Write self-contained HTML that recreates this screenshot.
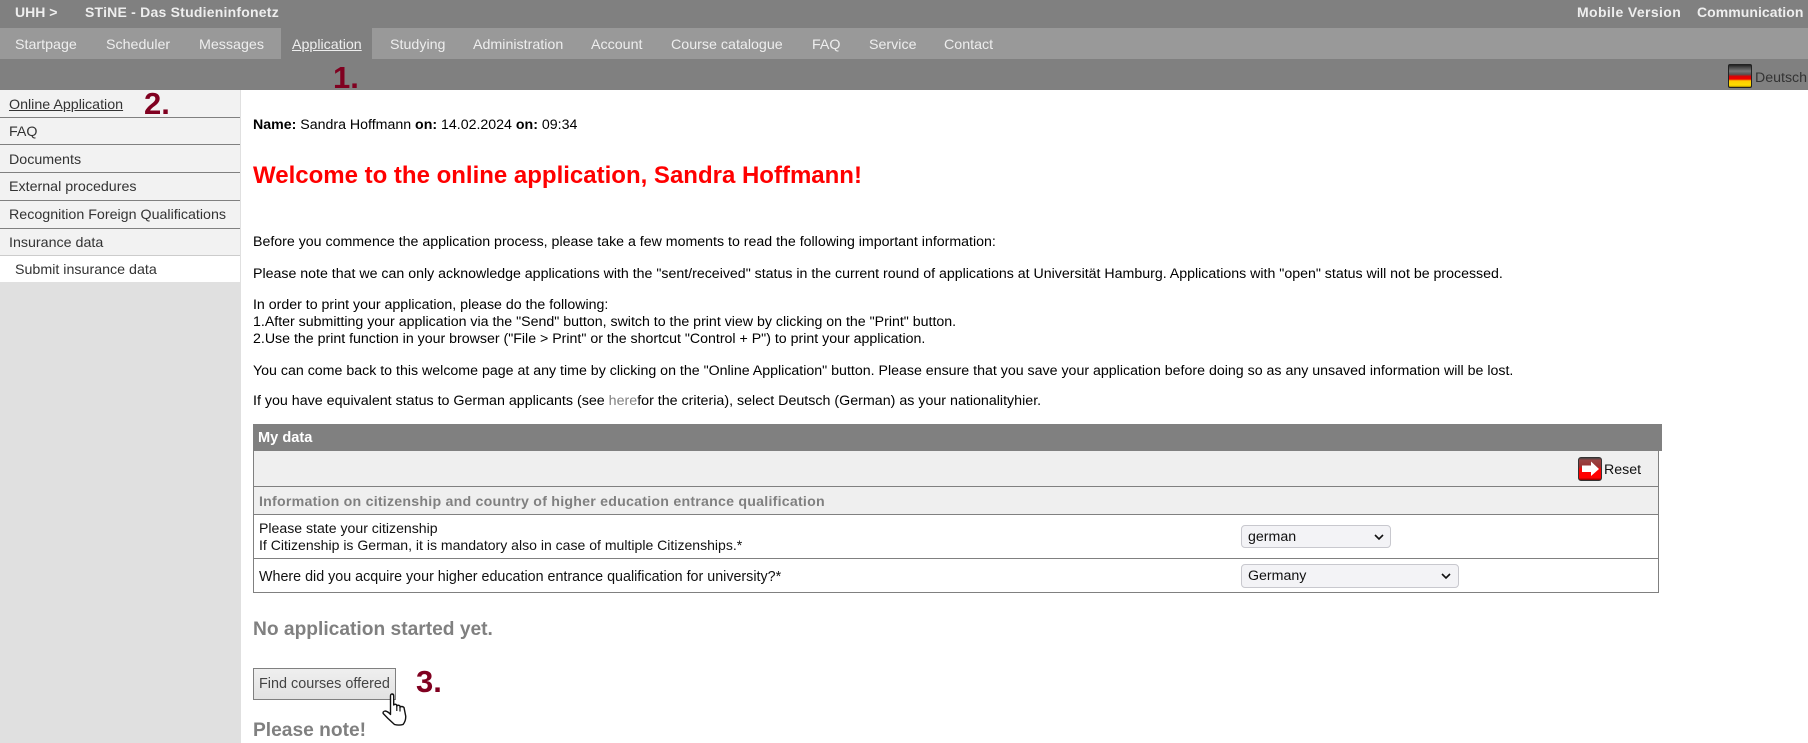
<!DOCTYPE html>
<html lang="en">
<head>
<meta charset="utf-8">
<title>STiNE - Das Studieninfonetz</title>
<style>
html,body{margin:0;padding:0;background:#fff;}
body{position:relative;width:1808px;height:743px;overflow:hidden;font-family:"Liberation Sans",Arial,sans-serif;font-size:14.18px;color:#000;}
.b{position:absolute;}
.t{position:absolute;white-space:nowrap;line-height:18px;height:18px;}
.top{color:#eee;font-weight:bold;font-size:14px;top:3px;line-height:18px;}
.nav{color:#eee;font-size:14.25px;top:36px;}
.side{font-size:14.25px;color:#333;}
.side-i{position:absolute;left:0;width:240px;background:#f2f2f2;border-bottom:1px solid #808080;}
.num{position:absolute;color:#800020;font-weight:bold;font-size:31px;line-height:30px;white-space:nowrap;}
.sel{position:absolute;box-sizing:border-box;background:#f3f3f6;border:1px solid #c8c8ce;border-radius:4px;font-size:14.2px;line-height:23px;padding-left:6px;color:#111;}
.sel svg{position:absolute;top:7px;}
.gh{font-weight:bold;color:#808080;font-size:19.2px;}
</style>
</head>
<body>
<div class="b" style="left:0;top:0;width:1808px;height:28px;background:#808080"></div>
<div class="b" style="left:0;top:28px;width:1808px;height:31px;background:#999"></div>
<div class="b" style="left:281px;top:28px;width:91px;height:31px;background:#808080"></div>
<div class="b" style="left:0;top:59px;width:1808px;height:31px;background:#808080"></div>

<div class="t top" style="left:15px">UHH &gt;</div>
<div class="t top" style="left:85px;letter-spacing:.22px">STiNE - Das Studieninfonetz</div>
<div class="t top" style="left:1577px;letter-spacing:.38px">Mobile Version</div>
<div class="t top" style="left:1697px;letter-spacing:.05px">Communication</div>

<div class="t nav" style="left:15px">Startpage</div>
<div class="t nav" style="left:106px">Scheduler</div>
<div class="t nav" style="left:199px">Messages</div>
<div class="t nav" style="left:292px;text-decoration:underline">Application</div>
<div class="t nav" style="left:390px">Studying</div>
<div class="t nav" style="left:473px">Administration</div>
<div class="t nav" style="left:591px">Account</div>
<div class="t nav" style="left:671px">Course catalogue</div>
<div class="t nav" style="left:812px">FAQ</div>
<div class="t nav" style="left:869px">Service</div>
<div class="t nav" style="left:944px">Contact</div>

<div class="b" style="left:1728px;top:64px;width:24px;height:24px;box-sizing:border-box;border:1px solid #222;border-radius:2px;background:linear-gradient(#222 0,#444 10%,#777 28%,#555 42%,#d00 52%,#e00 64%,#fc0 72%,#fd0 92%,#a80 100%)"></div>
<div class="t" style="left:1755px;top:69px;font-size:14.2px;color:#333">Deutsch</div>

<div class="num" style="left:333px;top:63px">1.</div>

<!-- Sidebar -->
<div class="b" style="left:0;top:90px;width:241px;height:653px;background:#e0e0e0"></div>
<div class="side-i" style="top:90px;height:27px"></div>
<div class="side-i" style="top:118px;height:26px"></div>
<div class="side-i" style="top:145px;height:27px"></div>
<div class="side-i" style="top:173px;height:27px"></div>
<div class="side-i" style="top:201px;height:27px"></div>
<div class="side-i" style="top:229px;height:26px;border-bottom-color:#ccc"></div>
<div class="b" style="left:0;top:256px;width:240px;height:26px;background:#fff"></div>
<div class="t side" style="left:9px;top:96px;text-decoration:underline">Online Application</div>
<div class="t side" style="left:9px;top:123px">FAQ</div>
<div class="t side" style="left:9px;top:151px">Documents</div>
<div class="t side" style="left:9px;top:178px">External procedures</div>
<div class="t side" style="left:9px;top:206px">Recognition Foreign Qualifications</div>
<div class="t side" style="left:9px;top:234px">Insurance data</div>
<div class="t side" style="left:15px;top:261px">Submit insurance data</div>
<div class="num" style="left:144px;top:89px">2.</div>

<!-- Main text -->
<div class="t" style="left:253px;top:116px"><b>Name:</b> Sandra Hoffmann <b>on:</b> 14.02.2024 <b>on:</b> 09:34</div>
<div class="t" style="left:253px;top:161px;font-size:24px;line-height:30px;height:30px;font-weight:bold;color:#f00">Welcome to the online application, Sandra Hoffmann!</div>
<div class="t" style="left:253px;top:233px">Before you commence the application process, please take a few moments to read the following important information:</div>
<div class="t" style="left:253px;top:265px">Please note that we can only acknowledge applications with the "sent/received" status in the current round of applications at Universität Hamburg. Applications with "open" status will not be processed.</div>
<div class="t" style="left:253px;top:296px">In order to print your application, please do the following:</div>
<div class="t" style="left:253px;top:313px">1.After submitting your application via the "Send" button, switch to the print view by clicking on the "Print" button.</div>
<div class="t" style="left:253px;top:330px">2.Use the print function in your browser ("File &gt; Print" or the shortcut "Control + P") to print your application.</div>
<div class="t" style="left:253px;top:362px;font-size:14.2px">You can come back to this welcome page at any time by clicking on the "Online Application" button. Please ensure that you save your application before doing so as any unsaved information will be lost.</div>
<div class="t" style="left:253px;top:392px;font-size:14.26px">If you have equivalent status to German applicants (see <span style="color:#808080">here</span>for the criteria), select Deutsch (German) as your nationalityhier.</div>

<!-- Table -->
<div class="b" style="left:253px;top:424px;width:1409px;height:27px;background:#808080"></div>
<div class="t" style="left:258px;top:429px;color:#fff;font-weight:bold;font-size:14.6px">My data</div>
<div class="b" style="left:253px;top:451px;width:1404px;height:141px;box-sizing:content-box;border-left:1px solid #808080;border-right:1px solid #808080;border-bottom:1px solid #808080;"></div>
<div class="b" style="left:254px;top:451px;width:1404px;height:35px;background:#efefef;border-bottom:1px solid #808080"></div>
<div class="b" style="left:254px;top:487px;width:1404px;height:27px;background:#efefef;border-bottom:1px solid #808080"></div>
<div class="b" style="left:254px;top:558px;width:1404px;height:1px;background:#808080"></div>

<div class="b" style="left:1578px;top:457px;width:24px;height:24px;border-radius:3px;box-sizing:border-box;border:1px solid #333;background:linear-gradient(#444 0,#944 10%,#933 38%,#f00 52%,#f00 90%,#800 100%)">
<svg width="22" height="22" viewBox="0 0 22 22" style="display:block"><path d="M3 7.5H12V3.5L20 11L12 18V14H3Z" fill="#fff"/></svg>
</div>
<div class="t" style="left:1604px;top:461px;font-size:14.2px;color:#111">Reset</div>
<div class="t" style="left:259px;top:493px;font-weight:bold;color:#808080;letter-spacing:.23px">Information on citizenship and country of higher education entrance qualification</div>
<div class="t" style="left:259px;top:519px;font-size:14.1px;color:#111">Please state your citizenship</div>
<div class="t" style="left:259px;top:536px;font-size:14.05px;color:#111">If Citizenship is German, it is mandatory also in case of multiple Citizenships.*</div>
<div class="t" style="left:259px;top:568px;font-size:14.3px;color:#111">Where did you acquire your higher education entrance qualification for university?*</div>

<div class="sel" style="left:1241px;top:525px;width:150px;height:23px">german<svg width="10" height="8" viewBox="0 0 10 8" style="left:132px"><path d="M1 2L5 6L9 2" fill="none" stroke="#111" stroke-width="1.6"/></svg></div>
<div class="sel" style="left:1241px;top:564px;width:218px;height:24px">Germany<svg width="10" height="8" viewBox="0 0 10 8" style="left:199px"><path d="M1 2L5 6L9 2" fill="none" stroke="#111" stroke-width="1.6"/></svg></div>

<div class="t gh" style="left:253px;top:621px">No application started yet.</div>

<div class="b" style="left:253px;top:668px;width:143px;height:32px;box-sizing:border-box;border:1px solid #808080;background:linear-gradient(#efefef,#e2e2e2)"></div>
<div class="t" style="left:259px;top:675px;font-size:14.4px;color:#444">Find courses offered</div>
<div class="num" style="left:416px;top:667px">3.</div>

<div class="t gh" style="left:253px;top:722px">Please note!</div>

<svg class="b" style="left:382px;top:693px" width="25" height="33" viewBox="0 0 25 33">
<path d="M8.5 17V3Q8.5 1 10 1Q11.7 1 11.7 3V12Q13.2 10.5 14.8 12V13Q16.3 11.5 18 13V14.2Q20 12.7 22 14.5L23.7 23Q24 28 21 31.5Q17 32.7 12.5 31.5L6 25.5L1.2 20.5Q0.6 18.5 3 18Q6 18.3 8.5 21.5Z" fill="#fff" stroke="#111" stroke-width="1.4" stroke-linejoin="round"/>
<path d="M14.8 12.5V18M18 14V18.5" fill="none" stroke="#111" stroke-width="1.2"/>
</svg>
</body>
</html>
